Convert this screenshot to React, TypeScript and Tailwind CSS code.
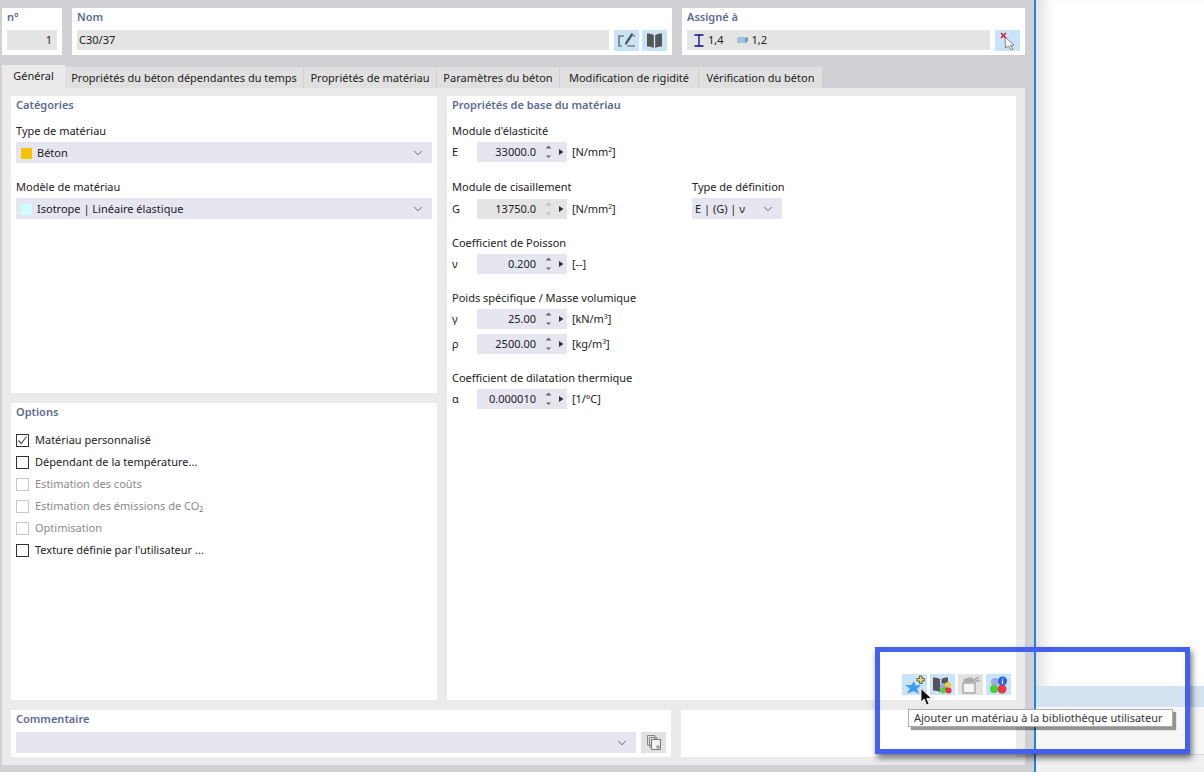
import { ChevronDown } from "lucide-react"
import type { ReactNode } from "react"

const tabs = [
  { label: "Propriétés du béton dépendantes du temps", width: "w-[239px]" },
  { label: "Propriétés de matériau", width: "w-[133px]" },
  { label: "Paramètres du béton", width: "w-[123px]" },
  { label: "Modification de rigidité", width: "w-[139px]" },
  { label: "Vérification du béton", width: "w-[124px]" },
]

const options = [
  { label: "Matériau personnalisé", checked: true },
  { label: "Dépendant de la température..." },
  { label: "Estimation des coûts", disabled: true },
  { label: "Estimation des émissions de CO₂", disabled: true },
  { label: "Optimisation", disabled: true },
  { label: "Texture définie par l'utilisateur ..." },
]

function Title({ children }: { children: ReactNode }) {
  return <div className="h-[18px] leading-[18px] font-semibold text-[#5b6b93]">{children}</div>
}

function Select({ children, className }: { children?: ReactNode; className: string }) {
  return (
    <div className={`flex h-[21px] items-center justify-between bg-[#e6e6f0] pr-[7px] ${className}`}>
      <div className="flex items-center pt-[1px]">{children}</div>
      <ChevronDown className="h-[14px] w-[14px] text-[#333]" strokeWidth={1.2} />
    </div>
  )
}

function Swatch({ color }: { color: string }) {
  return <span className={`mr-[5px] ml-[5px] h-[11px] w-[11px] ${color}`} />
}

function Spinner({ disabled }: { disabled?: boolean }) {
  const c = disabled ? "#bbb" : "#666"
  return (
    <svg width="31" height="20" viewBox="0 0 31 20" className="shrink-0">
      <path d="M9.5 6.5 L12.5 3.5 L15.5 6.5 Z" fill={c} />
      <path d="M10 13.5 L15 13.5 L12.5 16 Z" fill={c} />
      <path d="M23 7 L27.5 10 L23 13 Z" fill="#333" />
    </svg>
  )
}

function NumberRow({ sym, value, unit, sup, disabled, className }: { sym: string; value: string; unit: string; sup?: string; disabled?: boolean; className?: string }) {
  return (
    <div className={`flex h-[20px] items-center ${className ?? ""}`}>
      <span className="w-[25px]">{sym}</span>
      <div className={`flex h-[20px] w-[90px] items-center justify-end ${disabled ? "bg-[#e4e4e4]" : "bg-[#e6e6f0]"}`}>
        <span className="pt-[1px]">{value}</span>
        <Spinner disabled={disabled} />
      </div>
      <span className="ml-[5px] tracking-[-0.1px]">
        {unit}
        {sup && <sup className="text-[7px]">{sup}</sup>}
        {sup && "]"}
      </span>
    </div>
  )
}

function IconButton({ children, className }: { children: ReactNode; className?: string }) {
  return <div className={`flex h-[21px] w-[25px] shrink-0 items-center justify-center ${className ?? "bg-[#c9e3f9]"}`}>{children}</div>
}

function OptionRow({ label, checked, disabled }: { label: string; checked?: boolean; disabled?: boolean }) {
  return (
    <div className={`flex h-[22px] items-center ${disabled ? "text-[#8a8a8a]" : ""}`}>
      <span className={`flex h-[13px] w-[13px] items-center justify-center border bg-white ${disabled ? "border-[#c8c8c8]" : "border-[#333]"}`}>
        {checked && (
          <svg width="11" height="11" viewBox="0 0 11 11">
            <path d="M1.5 5.5 L4.2 8.5 L9.5 1.5" fill="none" stroke="#555" strokeWidth="1.2" />
          </svg>
        )}
      </span>
      <span className="ml-[6px]">{label}</span>
    </div>
  )
}

export default function App() {
  return (
    <div className="relative flex h-[772px] w-[1204px] overflow-hidden bg-white text-[11px] text-[#222] [font-family:'Noto_Sans',sans-serif]">
      <div className="flex h-full w-[1034px] shrink-0 flex-col bg-[#d0d0d5] pt-[8px] pl-[2px]">
        {/* header */}
        <div className="flex gap-[10px]">
          <div className="h-[47px] w-[60px] bg-white px-[5px]">
            <Title>n°</Title>
            <div className="mt-[4px] h-[20px] bg-[#e4e4e4] pr-[5px] text-right leading-[20px]">1</div>
          </div>
          <div className="h-[47px] w-[600px] bg-white px-[5px]">
            <Title>Nom</Title>
            <div className="mt-[4px] flex gap-[3px]">
              <div className="mr-[2px] h-[20px] w-[532px] bg-[#e4e4e4] pl-[2px] leading-[20px]">C30/37</div>
              <IconButton>
                <svg width="20" height="17" viewBox="0 0 20 17">
                  <path d="M7 4 H2 V14 H5 M10 14 H18" fill="none" stroke="#555" strokeWidth="1.2" />
                  <path d="M14.5 1 L16.5 2.2 L10 12 L8 13 L8.2 10.5 Z" fill="#555" />
                  <path d="M16 4 H18" stroke="#555" strokeWidth="1.2" />
                </svg>
              </IconButton>
              <IconButton>
                <svg width="17" height="17" viewBox="0 0 17 17">
                  <path d="M1 1.5 Q5 1 7.8 3 V16 Q5 14 1 14.5 Z M9.2 3 Q12 1 16 1.5 V14.5 Q12 14 9.2 16 Z" fill="#555" />
                </svg>
              </IconButton>
            </div>
          </div>
          <div className="h-[47px] w-[343px] bg-white px-[5px]">
            <Title>Assigné à</Title>
            <div className="mt-[4px] flex gap-[5px]">
              <div className="flex h-[20px] w-[303px] items-center bg-[#e4e4e4] pl-[7px]">
                <svg width="10" height="13" viewBox="0 0 10 13">
                  <path d="M0.5 1 H9.5 M5 1 V12 M0.5 12 H9.5" fill="none" stroke="#0a0a8c" strokeWidth="1.3" />
                </svg>
                <span className="ml-[4px]">1,4</span>
                <svg width="11" height="8" viewBox="0 0 11 8" className="ml-[13px]">
                  <path d="M0 2 L2 1 H11 V5 L9 7 H0 Z" fill="#a3bfdd" />
                  <path d="M8 2 H11 V5 L8 7 Z" fill="#7694b8" />
                </svg>
                <span className="ml-[4px]">1,2</span>
              </div>
              <IconButton>
                <svg width="18" height="18" viewBox="0 0 18 18">
                  <path d="M6 5 L15 13 L11.5 13.5 L14 17 L12 18 L9.5 14 L6.5 16 Z" fill="#f5f5f5" stroke="#777" strokeWidth="0.9" />
                  <path d="M2 1 L7 6 M7 1 L2 6" stroke="#e01030" strokeWidth="1.5" />
                </svg>
              </IconButton>
            </div>
          </div>
        </div>

        {/* tabs */}
        <div className="mt-[10px] flex h-[23px] items-end">
          <div className="flex h-[23px] w-[63px] items-center justify-center bg-[#ebebeb]">Général</div>
          {tabs.map((t) => (
            <div key={t.label} className={`flex h-[21px] items-center justify-center border-r border-[#d0d0d5] bg-[#e0e0e0] pt-[1px] ${t.width}`}>
              {t.label}
            </div>
          ))}
        </div>

        {/* tab body */}
        <div className="flex h-[677px] w-[1023px] flex-col gap-[10px] bg-[#ebebeb] px-[9px] pt-[8px]">
          <div className="flex h-[604px] gap-[10px]">
            <div className="flex w-[426px] flex-col gap-[10px]">
              <div className="h-[297px] bg-white px-[5px]">
                <Title>Catégories</Title>
                <div className="mt-[7px] h-[20px] leading-[20px]">Type de matériau</div>
                <Select className="mt-[1px]">
                  <Swatch color="bg-[#f5c400]" />
                  Béton
                </Select>
                <div className="mt-[14px] h-[20px] leading-[20px]">Modèle de matériau</div>
                <Select className="mt-[1px]">
                  <Swatch color="bg-[#ccffff]" />
                  Isotrope | Linéaire élastique
                </Select>
              </div>
              <div className="h-[297px] bg-white px-[5px]">
                <Title>Options</Title>
                <div className="mt-[8px]">
                  {options.map((o) => (
                    <OptionRow key={o.label} {...o} />
                  ))}
                </div>
              </div>
            </div>

            <div className="flex w-[569px] flex-col bg-white pr-[5px] pl-[5px]">
              <Title>Propriétés de base du matériau</Title>
              <div className="mt-[7px] h-[20px] leading-[20px]">Module d'élasticité</div>
              <NumberRow className="mt-[1px]" sym="E" value="33000.0" unit="[N/mm" sup="2" />
              <div className="mt-[15px] flex">
                <div className="w-[240px]">
                  <div className="h-[20px] leading-[20px]">Module de cisaillement</div>
                  <NumberRow className="mt-[2px]" sym="G" value="13750.0" unit="[N/mm" sup="2" disabled />
                </div>
                <div>
                  <div className="h-[20px] leading-[20px]">Type de définition</div>
                  <Select className="mt-[1px] w-[90px] pl-[3px]">E | (G) | ν</Select>
                </div>
              </div>
              <div className="mt-[14px] h-[20px] leading-[20px]">Coefficient de Poisson</div>
              <NumberRow className="mt-[1px]" sym="ν" value="0.200" unit="[--]" />
              <div className="mt-[14px] h-[20px] leading-[20px]">Poids spécifique / Masse volumique</div>
              <NumberRow className="mt-[1px]" sym="γ" value="25.00" unit="[kN/m" sup="3" />
              <NumberRow className="mt-[5px]" sym="ρ" value="2500.00" unit="[kg/m" sup="3" />
              <div className="mt-[14px] h-[20px] leading-[20px]">Coefficient de dilatation thermique</div>
              <NumberRow className="mt-[1px]" sym="α" value="0.000010" unit="[1/°C]" />

              <div className="mt-auto mb-[5px] flex justify-end gap-[3px]">
                <IconButton>
                  <svg width="22" height="19" viewBox="0 0 22 19">
                    <path d="M10 6 L11.5 10.5 L17 10 L13 14 L15 19 L10 16 L3 18.5 L6 13.5 L1 10 L7.5 10 Z" fill="#3d9bf0" />
                    <path d="M13 3.5 H15.5 V1 H18 V3.5 H20.5 V6 H18 V8.5 H15.5 V6 H13 Z" fill="#e8d860" stroke="#444" strokeWidth="0.8" />
                  </svg>
                </IconButton>
                <IconButton>
                  <svg width="21" height="18" viewBox="0 0 21 18">
                    <path d="M1 1.5 Q5 1 8 3 V16 Q5 14 1 14.5 Z M9.5 3 Q12 1 16 1.5 V14 L9.5 16 Z" fill="#555" />
                    <circle cx="11" cy="10" r="3" fill="#9ba8e8" />
                    <circle cx="16" cy="9" r="3" fill="#e8d030" />
                    <circle cx="11" cy="14.5" r="3" fill="#5ad040" />
                    <circle cx="16.5" cy="14.5" r="3" fill="#e83040" />
                  </svg>
                </IconButton>
                <IconButton className="bg-[#e2e2e2]">
                  <svg width="20" height="18" viewBox="0 0 20 18">
                    <path d="M2 7 H14 V17 H2 Z" fill="#f4f4f4" stroke="#888" />
                    <path d="M2 7 L3 3 L11 1 L13 6 Z" fill="#aaa" />
                    <path d="M11 5 L18 1 M13 6 L19 4" stroke="#aaa" strokeWidth="1.5" />
                  </svg>
                </IconButton>
                <IconButton>
                  <svg width="21" height="18" viewBox="0 0 21 18">
                    <circle cx="7" cy="6" r="4" fill="#9ba8e8" />
                    <circle cx="6" cy="13" r="4" fill="#44d03a" />
                    <circle cx="14" cy="13" r="4.5" fill="#e83848" />
                    <circle cx="14.5" cy="5" r="4.5" fill="#2a62d8" />
                    <path d="M14.5 2.5 V3.6 M14.5 4.6 V8" stroke="#fff" strokeWidth="1.3" />
                  </svg>
                </IconButton>
              </div>
            </div>
          </div>

          <div className="flex h-[47px] gap-[10px]">
            <div className="w-[660px] bg-white px-[5px]">
              <Title>Commentaire</Title>
              <div className="mt-[4px] flex gap-[5px]">
                <Select className="w-[620px]" />
                <IconButton className="bg-[#e2e2e2]">
                  <svg width="16" height="17" viewBox="0 0 16 17">
                    <path d="M1.5 1.5 H9 V11 H1.5 Z M3.5 3.5 H11 V13 H3.5 Z" fill="#e2e2e2" stroke="#888" />
                    <path d="M5.5 5.5 H14.5 V15.5 H5.5 Z" fill="#f2f2f2" stroke="#777" />
                    <path d="M10.5 11.5 H13.5 V14.5 H10.5 Z" fill="#999" />
                  </svg>
                </IconButton>
              </div>
            </div>
            <div className="flex-1 bg-white" />
          </div>
        </div>
      </div>

      {/* window behind, right of the dialog */}
      <div className="w-[2px] shrink-0 bg-[#1a86e0]" />
      <div className="flex flex-1 flex-col bg-white shadow-[inset_16px_0_14px_-8px_rgba(0,0,0,0.12)]">
        <div className="h-[686px]" />
        <div className="h-[21px] bg-[#d5e3f1]" />
        <div className="h-[48px] border-b border-[#d8d8d8] bg-[#f7f7f7]" />
        <div className="flex-1 bg-[#f0f0f0]" />
      </div>

      {/* annotation frame */}
      <div className="absolute top-[647px] left-[875px] h-[107px] w-[315px] border-[5px] border-[#4361ee] shadow-[2px_4px_6px_rgba(0,0,0,0.55)]" />

      {/* tooltip */}
      <div className="absolute top-[709px] left-[908px] flex h-[18px] w-[265px] items-center border border-[#aaa] bg-white pl-[5px] text-[11px] whitespace-nowrap text-[#333] shadow-[3px_3px_1px_rgba(0,0,0,0.4)]">
        Ajouter un matériau à la bibliothèque utilisateur
      </div>

      {/* mouse cursor */}
      <svg width="13" height="18" viewBox="0 0 13 18" className="absolute top-[688px] left-[920px]">
        <path d="M1 0.5 L1 14 L4.2 11 L6.5 17 L9 16 L6.8 10.5 L11.5 10.5 Z" fill="#111" stroke="#fff" strokeWidth="0.8" />
      </svg>
    </div>
  )
}
